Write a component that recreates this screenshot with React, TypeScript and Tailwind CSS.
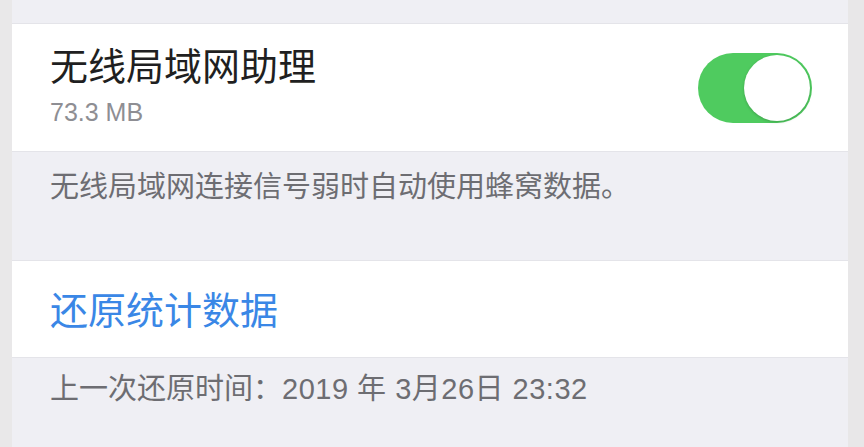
import React from "react";

export default function App() {
  const font = { fontFamily: '"Liberation Sans", "Noto Sans CJK SC", sans-serif' };
  return (
    <div className="flex h-[447px] w-[864px] overflow-hidden bg-[#efeff4]" style={font}>
      <div className="w-[12px] shrink-0 bg-[#e9e8e9]" />
      <div className="flex flex-1 flex-col">
        <div className="h-[24px] border-b border-[#e4e4e9] bg-[#efeff4]" />
        <div className="flex h-[127px] items-center justify-between bg-white pl-[38px] pr-[36px]">
          <div className="flex flex-col pb-[4px]">
            <div className="text-[38px] leading-[44px] text-[#1f1f21]">无线局域网助理</div>
            <div className="mt-[8px] text-[25px] leading-[30px] text-[#8e8e93]">73.3 MB</div>
          </div>
          <div className="relative h-[70px] w-[114px] rounded-full bg-[#4fcb5f]">
            <div className="absolute right-[2px] top-[2px] h-[66px] w-[66px] rounded-full bg-white shadow-[0_1px_3px_rgba(0,0,0,0.2)]" />
          </div>
        </div>
        <div className="h-[109px] border-t border-[#e4e4e9] bg-[#efeff4] pl-[38px] pt-[18px]">
          <div className="text-[29px] leading-[34px] text-[#6d6d72]">无线局域网连接信号弱时自动使用蜂窝数据。</div>
        </div>
        <div className="flex h-[97px] items-center border-t border-[#e4e4e9] bg-white pl-[38px] pt-[4px]">
          <div className="text-[38px] leading-[44px] text-[#3a87e6]">还原统计数据</div>
        </div>
        <div className="flex-1 border-t border-[#e4e4e9] bg-[#efeff4] pl-[38px] pt-[14px]">
          <div className="text-[29px] leading-[34px] text-[#6d6d72]">
            上一次还原时间：<span className="tracking-[0.5px]">2019 年 3月26日 23:32</span>
          </div>
        </div>
      </div>
      <div className="w-[16px] shrink-0 bg-[#e8e7e8]" />
    </div>
  );
}
